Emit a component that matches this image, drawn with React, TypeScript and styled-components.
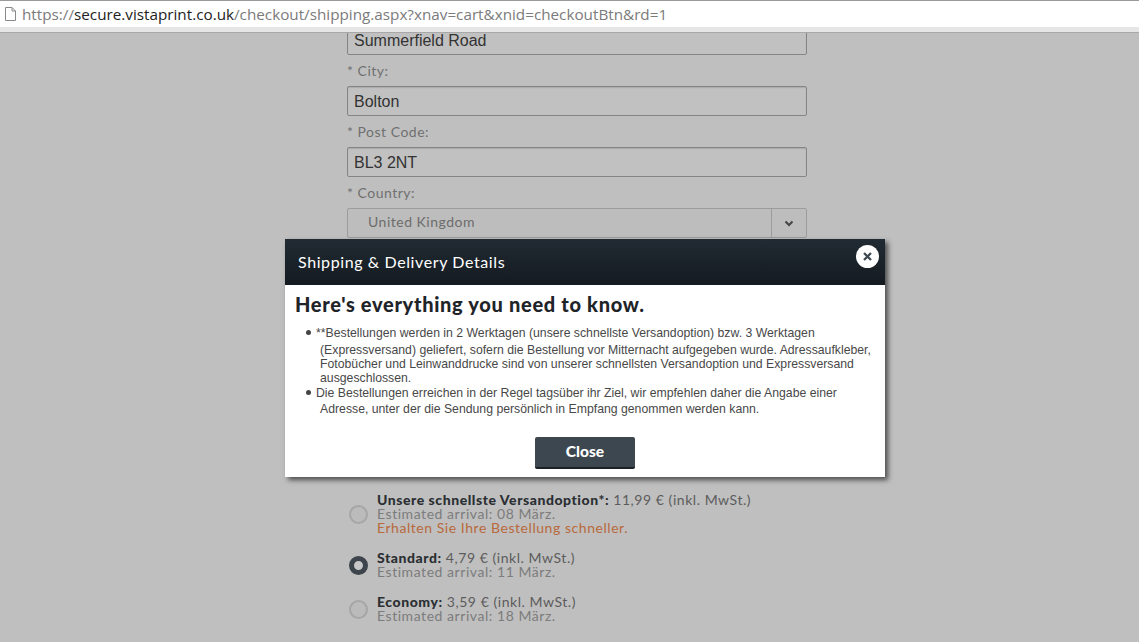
import React from "react";
import styled, { createGlobalStyle } from "styled-components";

const Global = createGlobalStyle`
  html, body { margin: 0; padding: 0; height: 100%; overflow: hidden; background: #bfbfbf; }
  #root { height: 100%; }
`;
const Page = styled.div`
  position: relative; width: 1139px; height: 642px; overflow: hidden; background: #bfbfbf;
  display: flex; flex-direction: column; font-family: "Lato", sans-serif;
`;
const AddressBar = styled.div`
  flex: none; height: 26px; background: #fff; border-top: 1px solid #9a9a9a; border-bottom: 5px solid #e6e6e6;
  display: flex; align-items: center; gap: 5px; padding-left: 4px;
  font-family: "Open Sans", sans-serif; font-size: 15.25px; color: #7b7b7b; white-space: nowrap;
  box-shadow: 0 1px 0 #a8a8a8; position: relative; z-index: 1;
`;
const Host = styled.span` color: #222; `;
const Url = styled.span``;
const Content = styled.div`
  flex: 1; min-height: 0; overflow: hidden; display: flex; flex-direction: column; padding-left: 347px;
`;
const Form = styled.div` width: 460px; display: flex; flex-direction: column; margin-top: -7px; `;
const Label = styled.div`
  font-size: 14px; letter-spacing: .5px; color: #707070; height: 17px; line-height: 17px; margin: 7px 0 7px;
`;
const Input = styled.div`
  box-sizing: border-box; height: 30px; border: 1px solid #858585; border-radius: 2px; background: #c1c1c1;
  font-family: "Liberation Sans", sans-serif; font-size: 16px; color: #333; padding-left: 6px; line-height: 29px;
  box-shadow: inset 0 1px 1px rgba(0,0,0,.12);
`;
const Select = styled.div`
  box-sizing: border-box; height: 30px; border: 1px solid #9c9c9c; border-radius: 2px; background: #bdbdbd;
  display: flex; align-items: center; justify-content: space-between;
  font-size: 14px; letter-spacing: .5px; color: #6c6c6c;
`;
const SelectText = styled.span` padding: 0 0 3px 20px; `;
const SelectArrow = styled.span`
  width: 34px; height: 100%; border-left: 1px solid #9c9c9c; display: flex; align-items: center; justify-content: center;
`;
const Options = styled.div` margin-top: 255px; display: flex; flex-direction: column; gap: 16px; width: 460px; `;
const Option = styled.div` display: flex; align-items: center; gap: 9px; margin-left: 2px; `;
const Radio = styled.span<{ $on?: boolean }>`
  box-sizing: border-box; flex: none; width: 19px; height: 19px; border-radius: 50%;
  background: ${p => (p.$on ? "#c8c8c8" : "#bbbbbb")};
  border: ${p => (p.$on ? "5px solid #3d444b" : "2px solid #a6a6a6")};
`;
const OptionText = styled.div` font-size: 14px; line-height: 14px; letter-spacing: .55px; color: #7c7c7c; white-space: nowrap; `;
const OptionTitle = styled.div` color: #5c5c5c; `;
const Strong = styled.b` color: #2b2f33; font-weight: 900; `;
const Promo = styled.div` color: #b9693c; `;

const Modal = styled.div`
  position: absolute; left: 285px; top: 239px; width: 600px; height: 238px; background: #fff;
  box-shadow: 3px 3px 5px rgba(40,40,40,.75); display: flex; flex-direction: column;
`;
const ModalHeader = styled.div`
  flex: none; height: 44px; padding: 0 13px 2px; background: linear-gradient(#212b33, #141a20); color: #fff;
  display: flex; align-items: center; font-size: 16px; letter-spacing: .6px;
`;
const CloseIcon = styled.span`
  position: absolute; right: 6px; top: 6px; width: 23px; height: 23px; border-radius: 50%; background: #fff;
  display: flex; align-items: center; justify-content: center;
`;
const ModalBody = styled.div` flex: 1; padding: 7px 10px 0; display: flex; flex-direction: column; `;
const Heading = styled.div` font-size: 20px; font-weight: 900; letter-spacing: .68px; color: #1f2429; line-height: 24px; `;
const Notes = styled.ul`
  list-style: none; margin: 10px 0 0; padding: 0 0 0 11px;
  font-family: "Liberation Sans", sans-serif; font-size: 12.25px; color: #484848;
`;
const Note = styled.li<{ $last?: boolean }>`
  position: relative; padding-left: 10px; line-height: 14px; margin-top: ${p => (p.$last ? "1px" : "0")};
`;
const FirstLine = styled.div<{ $short?: boolean }>`
  height: ${p => (p.$short ? "16px" : "17px")}; line-height: 14px; white-space: nowrap;
`;
const Rest = styled.div` padding-left: 4px; white-space: nowrap; `;
const Bullet = styled.span`
  position: absolute; left: 0; top: 4px; width: 5px; height: 5px; border-radius: 50%; background: #444;
`;
const CloseBtn = styled.button`
  align-self: center; margin-top: 21px; width: 100px; height: 32px; background: #3c4750; border: 0;
  border-bottom: 2px solid #1c2126; border-radius: 2px; color: #fff; font-family: "Lato", sans-serif;
  font-weight: 900; font-size: 15.5px; padding: 0 0 2px;
`;

export default function App() {
  return (
    <Page>
      <Global />
      <AddressBar>
        <svg width="13" height="16" viewBox="0 0 13 16" fill="none" stroke="#8a8a8a" strokeWidth="1">
          <path d="M1.5 1.5h6.5l3.5 3.5v9.5h-10z" />
          <path d="M8 1.5v3.5h3.5" />
        </svg>
        <Url>https://<Host>secure.vistaprint.co.uk</Host>/checkout/shipping.aspx?xnav=cart&amp;xnid=checkoutBtn&amp;rd=1</Url>
      </AddressBar>
      <Content>
        <Form>
          <Input>Summerfield Road</Input>
          <Label>* City:</Label>
          <Input>Bolton</Input>
          <Label>* Post Code:</Label>
          <Input>BL3 2NT</Input>
          <Label>* Country:</Label>
          <Select>
            <SelectText>United Kingdom</SelectText>
            <SelectArrow>
              <svg width="10" height="7" viewBox="0 0 10 7" fill="none" stroke="#444" strokeWidth="2">
                <path d="M1.5 1.5 5 5l3.5-3.5" />
              </svg>
            </SelectArrow>
          </Select>
        </Form>
        <Options>
          <Option>
            <Radio />
            <OptionText>
              <OptionTitle><Strong>Unsere schnellste Versandoption*:</Strong> 11,99 € (inkl. MwSt.)</OptionTitle>
              Estimated arrival: 08 März.
              <Promo>Erhalten Sie Ihre Bestellung schneller.</Promo>
            </OptionText>
          </Option>
          <Option>
            <Radio $on />
            <OptionText>
              <OptionTitle><Strong>Standard:</Strong> 4,79 € (inkl. MwSt.)</OptionTitle>
              Estimated arrival: 11 März.
            </OptionText>
          </Option>
          <Option>
            <Radio />
            <OptionText>
              <OptionTitle><Strong>Economy:</Strong> 3,59 € (inkl. MwSt.)</OptionTitle>
              Estimated arrival: 18 März.
            </OptionText>
          </Option>
        </Options>
      </Content>
      <Modal>
        <ModalHeader>Shipping &amp; Delivery Details</ModalHeader>
        <CloseIcon>
          <svg width="9" height="9" viewBox="0 0 9 9" stroke="#3c4750" strokeWidth="2.2">
            <path d="M1 1l7 7M8 1l-7 7" />
          </svg>
        </CloseIcon>
        <ModalBody>
          <Heading>Here's everything you need to know.</Heading>
          <Notes>
            <Note>
              <Bullet />
              <FirstLine>**Bestellungen werden in 2 Werktagen (unsere schnellste Versandoption) bzw. 3 Werktagen</FirstLine>
              <Rest>
                (Expressversand) geliefert, sofern die Bestellung vor Mitternacht aufgegeben wurde. Adressaufkleber,<br />
                Fotobücher und Leinwanddrucke sind von unserer schnellsten Versandoption und Expressversand<br />
                ausgeschlossen.
              </Rest>
            </Note>
            <Note $last>
              <Bullet />
              <FirstLine $short>Die Bestellungen erreichen in der Regel tagsüber ihr Ziel, wir empfehlen daher die Angabe einer</FirstLine>
              <Rest>Adresse, unter der die Sendung persönlich in Empfang genommen werden kann.</Rest>
            </Note>
          </Notes>
          <CloseBtn>Close</CloseBtn>
        </ModalBody>
      </Modal>
    </Page>
  );
}
